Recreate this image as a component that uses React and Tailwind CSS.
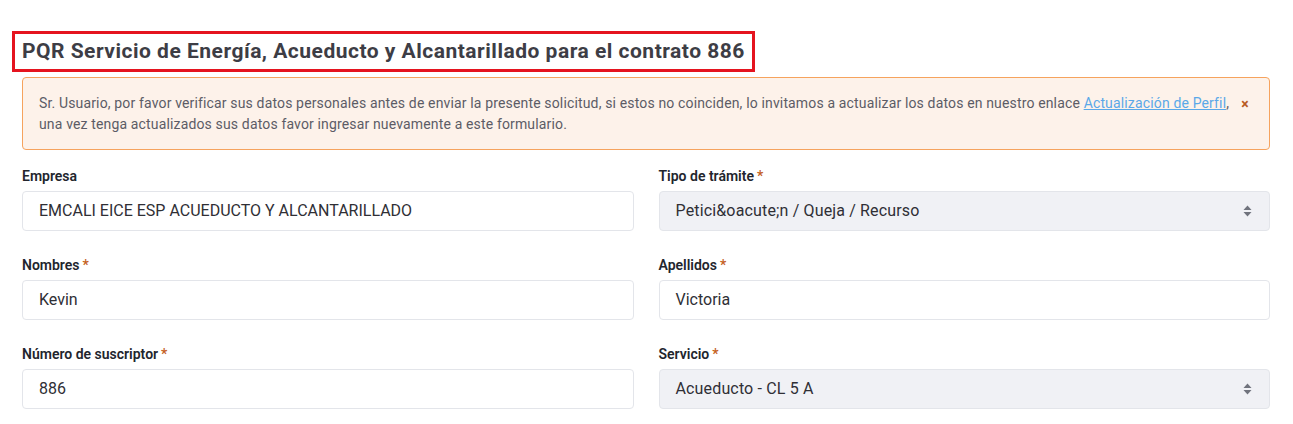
import React from 'react';

function Label({ text, required }) {
  return (
    <label className="block h-5 mb-[5px] text-[14px] leading-5 font-semibold text-[#22252d]">
      {text}
      {required && <span className="ml-[3px] text-[#c4601d]">*</span>}
    </label>
  );
}

function TextField({ label, required, value }) {
  return (
    <div>
      <Label text={label} required={required} />
      <div className="h-10 flex items-center px-4 rounded border border-[#e3e5ea] bg-white text-[16px] text-[#2f2f35]">
        {value}
      </div>
    </div>
  );
}

function SelectField({ label, required, value }) {
  return (
    <div>
      <Label text={label} required={required} />
      <div className="h-10 flex items-center justify-between pl-4 pr-[17px] rounded border border-[#e3e5ea] bg-[#f0f1f5] text-[16px] tracking-[0.15px] text-[#2f2f35]">
        <span>{value}</span>
        <svg width="9" height="16" viewBox="0 0 9 16" className="text-[#70737d]">
          <path d="M4.5 2.5 L8.5 7 H0.5 Z" fill="currentColor" />
          <path d="M4.5 13.5 L8.5 9 H0.5 Z" fill="currentColor" />
        </svg>
      </div>
    </div>
  );
}

export default function App() {
  const fields = [
    { type: 'text', label: 'Empresa', value: 'EMCALI EICE ESP ACUEDUCTO Y ALCANTARILLADO' },
    { type: 'select', label: 'Tipo de trámite', required: true, value: 'Petici&oacute;n / Queja / Recurso' },
    { type: 'text', label: 'Nombres', required: true, value: 'Kevin' },
    { type: 'text', label: 'Apellidos', required: true, value: 'Victoria' },
    { type: 'text', label: 'Número de suscriptor', required: true, value: '886' },
    { type: 'select', label: 'Servicio', required: true, value: 'Acueducto - CL 5 A' },
  ];

  return (
    <div className="min-h-screen bg-white pt-[31px] pl-[22px] pr-[23px] font-['Roboto','Liberation_Sans',sans-serif]">
      <div className="w-fit -ml-[10px] border-[3px] border-[#e5141f] pl-[7px] pr-[7px] h-[41px] flex items-center">
        <h1 className="text-[21px] font-bold text-[#3d3d45] tracking-[0.5px]">
          PQR Servicio de Energía, Acueducto y Alcantarillado para el contrato 886
        </h1>
      </div>

      <div className="mt-[5px] flex items-start rounded border border-[#f6a35e] bg-[#fdf2ea] pl-4 pr-[16px] pt-[15px] pb-[14px]">
        <div className="flex-1 text-[14px] leading-[21px] tracking-[0.15px] text-[#5c5c66]">
          <p className="whitespace-nowrap">
            Sr. Usuario, por favor verificar sus datos personales antes de enviar la presente solicitud, si estos no coinciden, lo invitamos a actualizar los datos en nuestro enlace{' '}
            <a href="#" className="text-[#5aa8e8] underline">Actualización de Perfil</a>,
          </p>
          <p>una vez tenga actualizados sus datos favor ingresar nuevamente a este formulario.</p>
        </div>
        <button className="mt-[1px] h-5 w-4 flex items-center justify-center text-[#b85a24] text-[14px] font-bold leading-none">
          ×
        </button>
      </div>

      <div className="mt-[16px] grid grid-cols-2 gap-x-[25px] gap-y-[24px]">
        {fields.map((f, i) =>
          f.type === 'select' ? (
            <SelectField key={i} label={f.label} required={f.required} value={f.value} />
          ) : (
            <TextField key={i} label={f.label} required={f.required} value={f.value} />
          )
        )}
      </div>
    </div>
  );
}
